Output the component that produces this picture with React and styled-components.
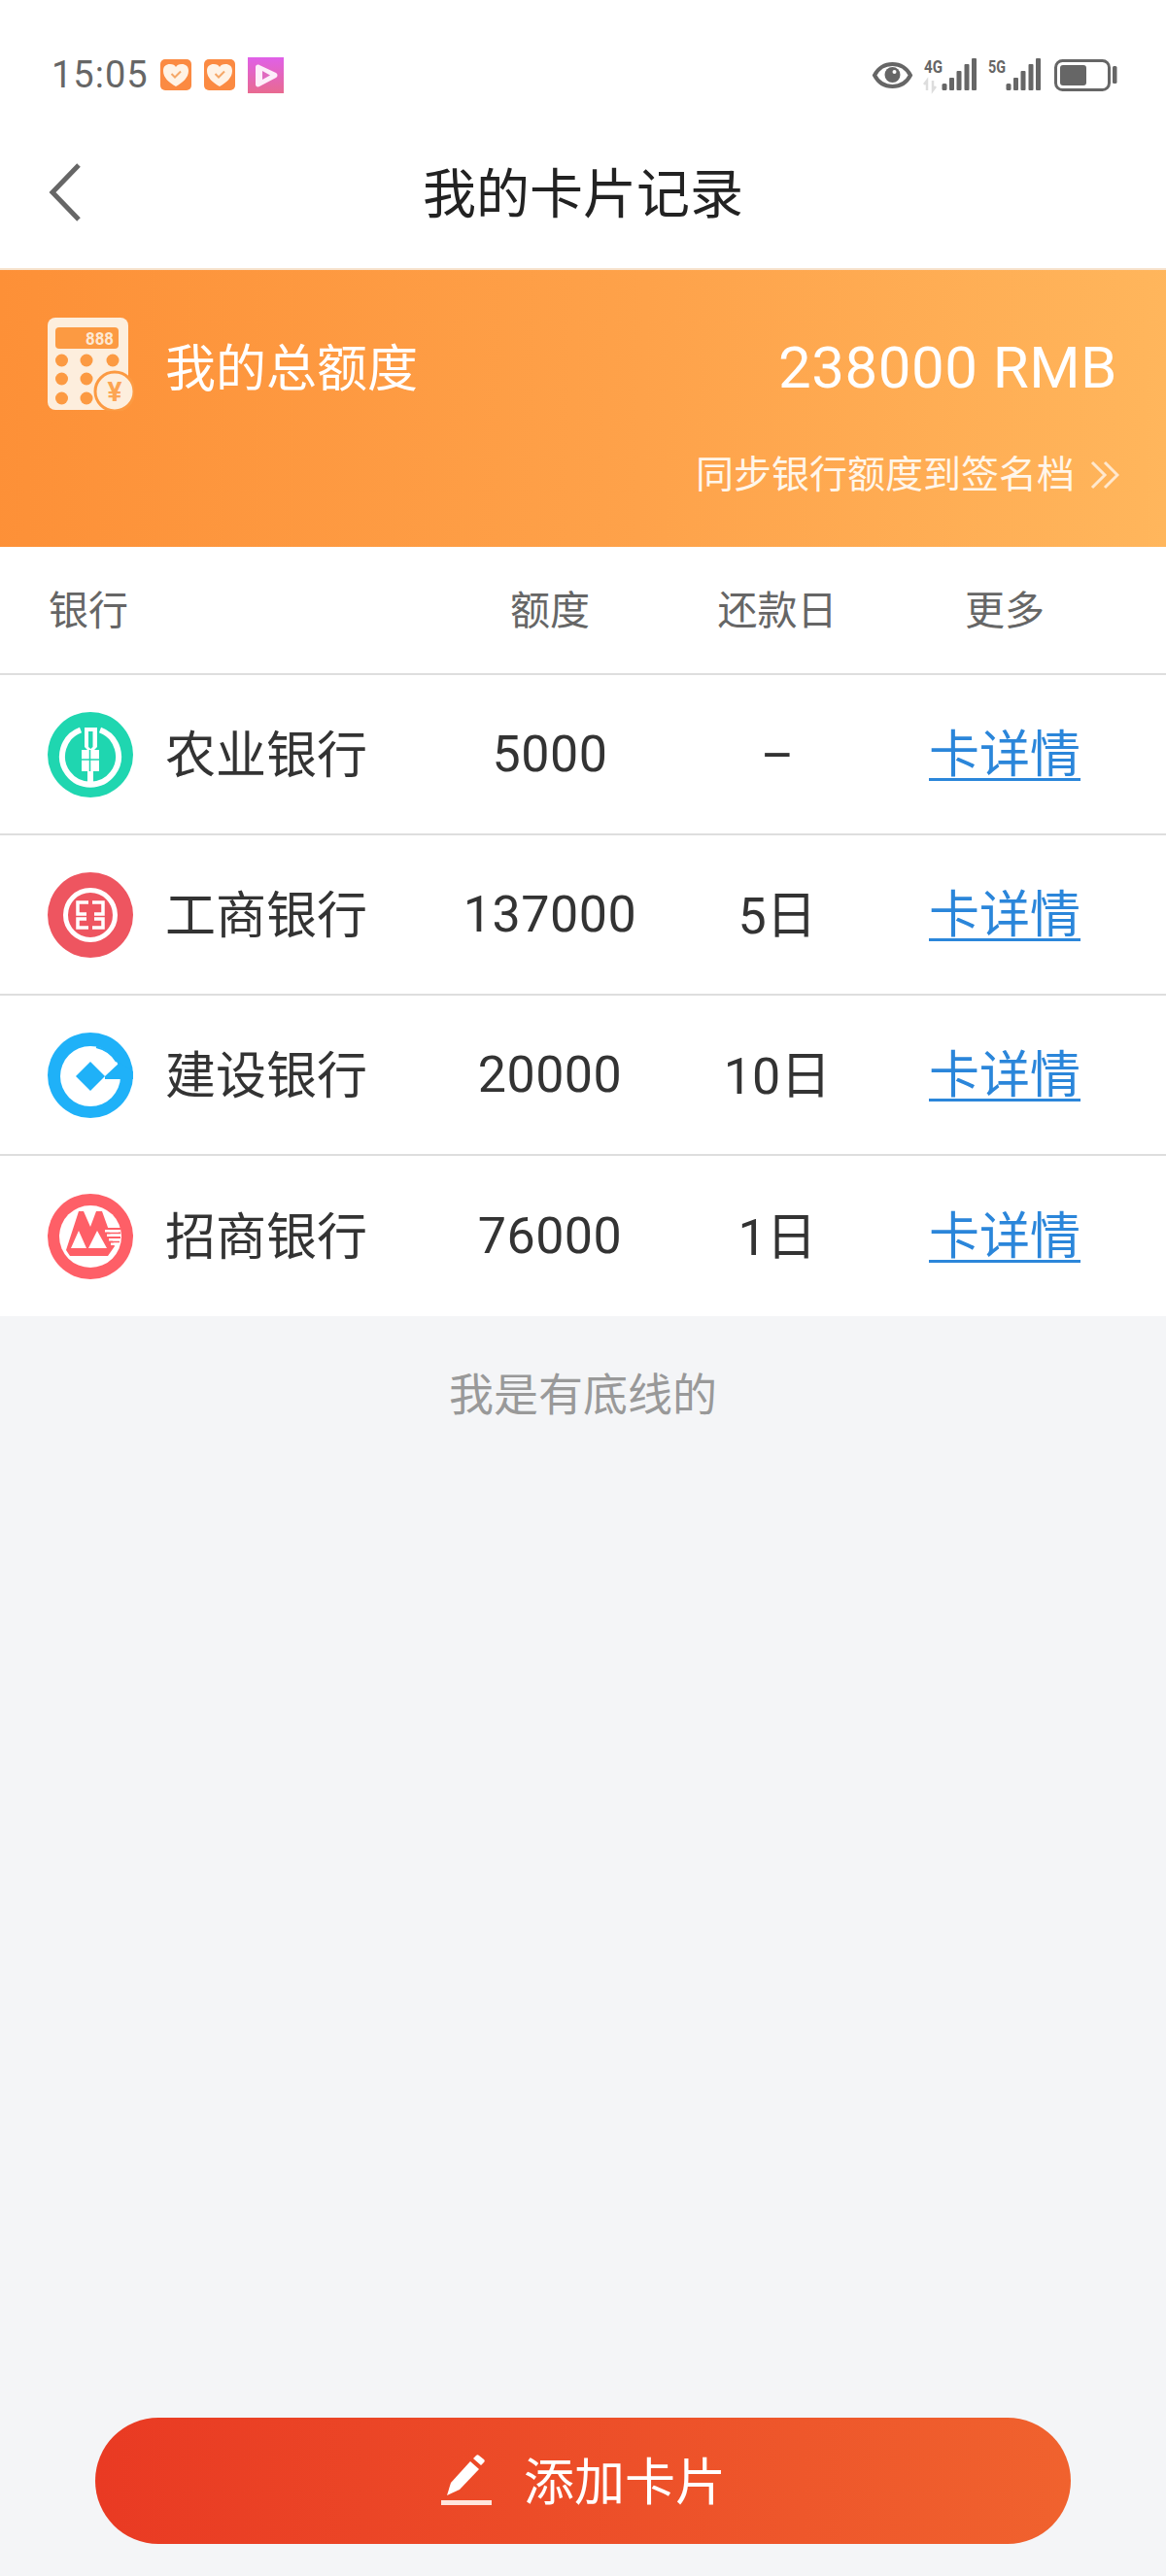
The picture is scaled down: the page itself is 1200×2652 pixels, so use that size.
import React from "react";
import styled, { createGlobalStyle } from "styled-components";

const Global = createGlobalStyle`
  html, body { margin: 0; padding: 0; background: #f4f5f7; }
  * { box-sizing: border-box; }
  body { font-family: Roboto, "Noto Sans CJK SC", sans-serif; }
`;

const Page = styled.div`
  width: 1200px;
  height: 2652px;
  display: flex;
  flex-direction: column;
  background: #f4f5f7;
`;
const Top = styled.header`
  background: #fff;
  height: 278px;
  border-bottom: 2px solid #f6e2cd;
  display: flex;
  flex-direction: column;
`;
const StatusBar = styled.div`
  height: 117px;
  padding: 37px 47px 0 53px;
  display: flex;
  align-items: center;
  justify-content: space-between;
`;
const StatusLeft = styled.div`
  display: flex;
  align-items: center;
`;
const Time = styled.span`
  font-size: 38px;
  color: #666;
  margin-right: 12px;
  letter-spacing: 1px;
`;
const Nav = styled.nav`
  flex: 1;
  position: relative;
  display: flex;
  align-items: center;
  justify-content: center;
  padding-bottom: 4px;
`;
const Back = styled.svg`
  position: absolute;
  left: 49px;
  top: 50px;
`;
const Title = styled.h1`
  margin: 0;
  font-size: 55px;
  font-weight: 400;
  color: #222;
`;
const Banner = styled.section`
  height: 285px;
  padding: 49px 48px 0 49px;
  background: linear-gradient(92deg, #fd9037 0%, #fea24a 55%, #ffb65c 100%);
  color: #fff;
  display: flex;
  flex-direction: column;
`;
const BannerTop = styled.div`
  display: flex;
  align-items: center;
  justify-content: space-between;
  height: 96px;
`;
const BannerLabel = styled.div`
  display: flex;
  align-items: center;
  gap: 32px;
  font-size: 52px;
`;
const Total = styled.div`
  font-size: 60px;
  letter-spacing: 0.5px;
  padding-top: 6px;
  margin-right: 2px;
`;
const Sync = styled.div`
  margin-top: 37px;
  display: flex;
  justify-content: flex-end;
  align-items: center;
  gap: 16px;
  font-size: 39px;
  line-height: 58px;
  color: #fff6ea;
`;
const Cols = styled.div`
  display: grid;
  grid-template-columns: 399px 234px 234px 234px;
  padding-left: 50px;
  align-items: center;
  background: #fff;
  border-bottom: 2px solid #dedede;
  &:last-child { border-bottom: 0; }
`;
const HeadRow = styled(Cols)`
  height: 132px;
  padding-bottom: 6px;
  font-size: 41px;
  color: #666;
`;
const Row = styled(Cols)`
  height: 165px;
  padding-left: 49px;
  grid-template-columns: 400px 234px 234px 234px;
  font-size: 52px;
  color: #333;
`;
const Cell = styled.div`
  text-align: center;
`;
const NumberCell = styled(Cell)`
  letter-spacing: 0.5px;
`;
const DayCell = styled(Cell)`
  padding: ${(p) => (p.$dash ? "4px 0 0" : "0 0 6px")};
`;
const LinkCell = styled(Cell)`
  padding-bottom: 8px;
`;
const BankCell = styled.div`
  display: flex;
  align-items: center;
  gap: 33px;
`;
const BankName = styled.span`
  padding-bottom: 6px;
`;
const Link = styled.a`
  color: #2b86da;
  text-decoration: underline;
  text-decoration-thickness: 3px;
  text-underline-offset: 6px;
`;
const Footer = styled.div`
  margin-top: 50px;
  text-align: center;
  font-size: 46px;
  line-height: 62px;
  color: #999;
`;
const AddButton = styled.button`
  margin: auto auto 33px;
  width: 1004px;
  height: 130px;
  border: 0;
  border-radius: 65px;
  background: linear-gradient(90deg, #e93a23 0%, #f0622e 100%);
  color: #fff;
  font: inherit;
  font-size: 52px;
  display: flex;
  align-items: center;
  justify-content: center;
  gap: 32px;
`;
const AddLabel = styled.span`
  padding-bottom: 6px;
`;

const Heart = () => (
  <svg width="32" height="32" viewBox="0 0 32 32" style={{ marginRight: 13 }}>
    <rect width="32" height="32" rx="5" fill="#fb8a42" />
    <path d="M16 28C9 24 3 19 3 12c0-5 3-7 7-7 3 0 5 1 6 3 1-2 3-3 6-3 4 0 7 2 7 7 0 7-6 12-13 16z" fill="#fff3e6" />
    <path d="M11.500 15l3.500 3.500 6-6" fill="none" stroke="#f5a868" strokeWidth="2" />
  </svg>
);
const Play = () => (
  <svg width="37" height="37" viewBox="0 0 37 37">
    <defs>
      <linearGradient id="pg" x1="0" y1="0" x2="0" y2="1">
        <stop offset="0" stopColor="#e060e8" />
        <stop offset="1" stopColor="#e86a90" />
      </linearGradient>
    </defs>
    <rect width="37" height="37" fill="url(#pg)" />
    <path d="M8 10c0-2 2-3 4-2l17 8c2 1 2 4 0 5L12 30c-2 1-4 0-4-2z" fill="#fdeefa" />
    <path d="M15 14l8 4.500-8 4.500z" fill="#e06ac0" />
  </svg>
);
const Bars = ({ x }) => (
  <g fill="#666" transform={`translate(${x} 0)`}>
    <rect x="0" y="34" width="5" height="7" rx="1.500" />
    <rect x="7.500" y="28" width="5" height="13" rx="1" />
    <rect x="15" y="21" width="5" height="20" rx="1" />
    <rect x="23" y="14" width="5" height="27" rx="1" />
    <rect x="30.500" y="8" width="5" height="33" rx="1" />
  </g>
);
const StatusRight = () => (
  <svg width="258" height="50" viewBox="0 0 258 50">
    <path d="M5 25.500C10 16 17 14 23.500 14S37 16 42 25.500C37 35 30 37 23.500 37S10 35 5 25.500z" fill="none" stroke="#666" strokeWidth="4" />
    <circle cx="23.500" cy="25" r="8" fill="#666" />
    <circle cx="25.500" cy="22" r="2" fill="#fff" />
    <text x="56" y="23" fontFamily="Roboto" fontWeight="700" fontSize="19" fill="#666" textLength="19" lengthAdjust="spacingAndGlyphs">4G</text>
    <path d="M59 41V31l-3 4M65 31v10l3-4" stroke="#ddd" strokeWidth="2.500" fill="none" />
    <Bars x={74.500} />
    <text x="122" y="23" fontFamily="Roboto" fontWeight="700" fontSize="19" fill="#666" textLength="18" lengthAdjust="spacingAndGlyphs">5G</text>
    <Bars x={140.500} />
    <rect x="191.500" y="10.500" width="55" height="30" rx="7" fill="none" stroke="#666" strokeWidth="3" />
    <rect x="196" y="15" width="27" height="21" rx="3" fill="#666" />
    <rect x="250" y="16" width="4.500" height="18" rx="1.500" fill="#666" />
  </svg>
);
const Calc = () => (
  <svg width="89" height="96" viewBox="0 0 89 96" style={{ flex: "none" }}>
    <rect width="83" height="95" rx="8" fill="#fdeedd" />
    <rect x="8" y="10" width="65" height="22" rx="4" fill="#fc9a42" />
    <text x="39" y="28" fontFamily="Roboto" fontSize="18" fontWeight="700" fill="#fde8d2" textLength="29" lengthAdjust="spacingAndGlyphs">888</text>
    {[44, 63, 83].map((y) =>
      [14.500, 40, 67].map((x) => <circle key={`${x}-${y}`} cx={x} cy={y} r="6.500" fill="#fc9a42" />)
    )}
    <circle cx="69" cy="76" r="20" fill="#fdeedd" stroke="#fc9a42" strokeWidth="3" />
    <text x="69" y="86" textAnchor="middle" fontFamily="Roboto" fontSize="28" fontWeight="700" fill="#fca553">¥</text>
  </svg>
);
const AbcLogo = () => (
  <svg width="88" height="88" viewBox="0 0 88 88" style={{ flex: "none" }}>
    <circle cx="44" cy="44" r="44" fill="#1fd6b0" />
    <path d="M34 18.500A29 29 0 1 0 54 18.500" fill="none" stroke="#fff" strokeWidth="6" />
    <path d="M38 16h13v20l-3 3h5v22h-6v15h-6V61h-6V39h6l-3-3z" fill="#fff" />
    <path d="M42 20h4.500v16l-2.200 2-2.300-2z" fill="#1fd6b0" />
    <path d="M34 49h19M43.500 39v22" stroke="#1fd6b0" strokeWidth="1.500" />
  </svg>
);
const IcbcLogo = () => (
  <svg width="88" height="88" viewBox="0 0 88 88" style={{ flex: "none" }}>
    <circle cx="44" cy="44" r="44" fill="#ee5560" />
    <circle cx="44" cy="44" r="25.500" fill="none" stroke="#fff" strokeWidth="5" />
    <path d="M42 31H31v12h9M46 31h11v12h-9M42 57H31v-9h9M46 57h11v-9h-9" fill="none" stroke="#fff" strokeWidth="3.500" />
  </svg>
);
const CcbLogo = () => (
  <svg width="88" height="88" viewBox="0 0 88 88" style={{ flex: "none" }}>
    <circle cx="44" cy="44" r="44" fill="#1fb1f8" />
    <circle cx="44" cy="45" r="31" fill="#fff" />
    <path d="M44 30l15 15-15 15-15-15z" fill="#1fb1f8" />
    <path d="M59 45l15-14 14 9v8H59z" fill="#1fb1f8" />
    <path d="M50 15c9 2 17 8 21 15" fill="none" stroke="#1fb1f8" strokeWidth="2" />
  </svg>
);
const CmbLogo = () => (
  <svg width="88" height="88" viewBox="0 0 88 88" style={{ flex: "none" }}>
    <circle cx="44" cy="44" r="44" fill="#fe5f67" />
    <circle cx="44" cy="44" r="32" fill="#fff" />
    <path d="M19 58L32 18h5l7 16 6-16h6l13 36-7 10H23z" fill="#fe5f67" />
    <path d="M24 56l8-18 8 18zM42 56l9-18 10 18z" fill="#fff" />
    <path d="M59 36h16M61 40.500h14M63 45h12M65 49.500h9" stroke="#fe5f67" strokeWidth="2" />
    <path d="M59 38.200h14M61 42.700h14M63 47.200h12M65 51.700h9" stroke="#fff" strokeWidth="2.400" />
  </svg>
);
const Pencil = () => (
  <svg width="54" height="54" viewBox="0 0 54 54" style={{ flex: "none" }}>
    <path d="M7 42l4-13L31 7l9 8-20 21z" fill="#fff" />
    <path d="M34 4l3-3c1-1 2-1 3 0l5 4c1 1 1 2 0 3l-3 3z" fill="#fff" />
    <rect x="1" y="47" width="52" height="5" fill="#ffe5dc" />
  </svg>
);
const DoubleChevron = () => (
  <svg width="30" height="30" viewBox="0 0 30 30" style={{ flex: "none", opacity: 0.7 }}>
    <path d="M2 2l13 13L2 28M15 2l13 13-13 13" fill="none" stroke="#fff" strokeWidth="3" />
  </svg>
);

const banks = [
  { name: "农业银行", Logo: AbcLogo, amount: "5000", day: "–" },
  { name: "工商银行", Logo: IcbcLogo, amount: "137000", day: "5日" },
  { name: "建设银行", Logo: CcbLogo, amount: "20000", day: "10日" },
  { name: "招商银行", Logo: CmbLogo, amount: "76000", day: "1日" },
];

export default function App() {
  return (
    <Page>
      <Global />
      <Top>
        <StatusBar>
          <StatusLeft>
            <Time>15:05</Time>
            <Heart />
            <Heart />
            <Play />
          </StatusLeft>
          <StatusRight />
        </StatusBar>
        <Nav>
          <Back width="38" height="62" viewBox="0 0 38 62">
            <path d="M32 3L5 31l27 28" fill="none" stroke="#666" strokeWidth="5" />
          </Back>
          <Title>我的卡片记录</Title>
        </Nav>
      </Top>
      <Banner>
        <BannerTop>
          <BannerLabel>
            <Calc />
            <span>我的总额度</span>
          </BannerLabel>
          <Total>238000 RMB</Total>
        </BannerTop>
        <Sync>
          <span>同步银行额度到签名档</span>
          <DoubleChevron />
        </Sync>
      </Banner>
      <div>
        <HeadRow>
          <div>银行</div>
          <Cell>额度</Cell>
          <Cell>还款日</Cell>
          <Cell>更多</Cell>
        </HeadRow>
        {banks.map(({ name, Logo, amount, day }) => (
          <Row key={name}>
            <BankCell>
              <Logo />
              <BankName>{name}</BankName>
            </BankCell>
            <NumberCell>{amount}</NumberCell>
            <DayCell $dash={day === "–"}>{day}</DayCell>
            <LinkCell>
              <Link>卡详情</Link>
            </LinkCell>
          </Row>
        ))}
      </div>
      <Footer>我是有底线的</Footer>
      <AddButton>
        <Pencil />
        <AddLabel>添加卡片</AddLabel>
      </AddButton>
    </Page>
  );
}
